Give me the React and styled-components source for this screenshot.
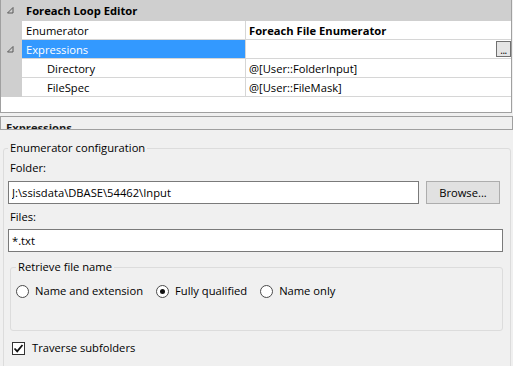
import React from 'react';
import styled, { createGlobalStyle } from 'styled-components';

const GlobalStyle = createGlobalStyle`
  html, body {
    margin: 0;
    padding: 0;
    background: #f0f0f0;
  }
  body {
    font-family: "Open Sans", "Liberation Sans", sans-serif;
    font-size: 11.2px;
    color: #000;
  }
`;

const Window = styled.div`
  width: 513px;
  height: 366px;
  overflow: hidden;
  background: #f0f0f0;
  display: flex;
  flex-direction: column;

  & > * {
    flex-shrink: 0;
  }
`;

const Grid = styled.div`
  width: 512px;
  height: 113px;
  box-sizing: border-box;
  border: 1px solid #a0a0a0;
  border-top: none;
  background: #fff;
  display: grid;
  grid-template-columns: 21px 224px 1fr;
  grid-template-rows: 21px repeat(4, 19px);
  align-content: start;
`;

const Gutter = styled.div`
  background: #cfcfcf;
  display: flex;
  align-items: center;
  justify-content: center;
  padding-right: 3px;
`;

const CategoryHeader = styled.div`
  grid-column: 2 / 4;
  background: #cfcfcf;
  font-weight: 700;
  display: flex;
  align-items: center;
  padding-left: 4px;
`;

const Cell = styled.div`
  display: flex;
  align-items: center;
  box-sizing: border-box;
  border-bottom: 1px solid #d6d6d6;
  border-right: ${p => (p.$name ? '1px solid #d6d6d6' : 'none')};
  padding-left: ${p => p.$indent || 4}px;
  background: ${p => (p.$selected ? '#3399ff' : '#fff')};
  color: ${p => (p.$selected ? '#fff' : '#000')};
  font-weight: ${p => (p.$bold ? 700 : 400)};
  white-space: nowrap;
  overflow: hidden;
`;

const EllipsisButton = styled.div`
  margin-left: auto;
  width: 15px;
  height: 16px;
  box-sizing: border-box;
  border: 1px solid #707070;
  background: #e5e5e5;
  font-size: 10px;
  line-height: 16px;
  text-align: center;
  letter-spacing: -0.5px;
`;

const Splitter = styled.div`
  height: 3px;
`;

const DescBar = styled.div`
  width: 513px;
  height: 14px;
  box-sizing: border-box;
  border: 1px solid #a0a0a0;
  overflow: hidden;
  padding: 3px 0 0 5px;
  font-weight: 700;
  line-height: 16px;
  color: #1e1e1e;
`;

const GroupBox = styled.fieldset`
  min-width: 0;
  border: 1px solid #dcdcdc;
  border-radius: 3px;
  margin: ${p => p.$margin};
  padding: ${p => p.$padding};
  line-height: 16px;
`;

const Legend = styled.legend`
  padding: 0 2px;
  line-height: 16px;
`;

const FieldLabel = styled.div`
  padding-left: 2px;
  line-height: 16px;
  margin-top: ${p => p.$top}px;
`;

const Row = styled.div`
  display: flex;
  align-items: center;
  gap: ${p => p.$gap || 0}px;
  margin-top: ${p => p.$top || 0}px;
`;

const TextBox = styled.input`
  flex: 1;
  min-width: 0;
  height: 23px;
  box-sizing: border-box;
  border: 1px solid #7a7a7a;
  background: #fff;
  padding: 0 3px;
  font: inherit;
  color: #000;
  outline: none;
  margin: 0;
`;

const Button = styled.div`
  width: 74px;
  height: 23px;
  box-sizing: border-box;
  border: 1px solid #adadad;
  background: #e1e1e1;
  display: flex;
  align-items: center;
  justify-content: center;
  margin-right: 3px;
`;

const Options = styled.div`
  display: flex;
  align-items: center;
  gap: 13px;
`;

const Option = styled.div`
  display: flex;
  align-items: center;
  gap: 6px;
  line-height: 16px;
`;

const Radio = styled.span`
  width: 13px;
  height: 13px;
  box-sizing: border-box;
  border-radius: 50%;
  border: 1px solid #4a4a4a;
  background: #fff;
  display: flex;
  align-items: center;
  justify-content: center;

  &::after {
    content: '';
    width: 5px;
    height: 5px;
    border-radius: 50%;
    background: #111;
    display: ${p => (p.$checked ? 'block' : 'none')};
  }
`;

const CheckRow = styled.div`
  display: flex;
  align-items: center;
  gap: 7px;
  padding-left: 4px;
  margin-top: 9px;
  line-height: 16px;
`;

const CheckBox = styled.span`
  width: 13px;
  height: 13px;
  box-sizing: border-box;
  border: 1px solid #333;
  background: #fff;
  display: flex;
  align-items: center;
  justify-content: center;
`;

const Expander = () => (
  <svg width="7" height="7" viewBox="0 0 7 7">
    <path d="M6 0.5 L6 6 L0.5 6 Z" fill="none" stroke="#595959" strokeWidth="1" />
  </svg>
);

const CheckMark = () => (
  <svg width="11" height="11" viewBox="0 0 11 11">
    <path d="M1.5 5.5 L4.2 8.3 L9.5 2" fill="none" stroke="#111" strokeWidth="1.8" />
  </svg>
);

const rows = [
  { name: 'Enumerator', value: 'Foreach File Enumerator', bold: true },
  { name: 'Expressions', selected: true, expander: true, button: true },
  { name: 'Directory', value: '@[User::FolderInput]', indent: 25 },
  { name: 'FileSpec', value: '@[User::FileMask]', indent: 25 },
];

const App = () => (
  <Window>
    <GlobalStyle />
    <Grid>
      <Gutter><Expander /></Gutter>
      <CategoryHeader>Foreach Loop Editor</CategoryHeader>
      {rows.map(r => (
        <React.Fragment key={r.name}>
          <Gutter>{r.expander && <Expander />}</Gutter>
          <Cell $name $indent={r.indent} $selected={r.selected}>{r.name}</Cell>
          <Cell $bold={r.bold} $indent={3}>
            {r.value}
            {r.button && <EllipsisButton>...</EllipsisButton>}
          </Cell>
        </React.Fragment>
      ))}
    </Grid>
    <Splitter />
    <DescBar>Expressions</DescBar>
    <GroupBox $margin="10px 2px 0 3px" $padding="0 7px 20px 4px">
      <Legend>Enumerator configuration</Legend>
      <FieldLabel $top={4}>Folder:</FieldLabel>
      <Row $gap={7} $top={5}>
        <TextBox readOnly value="J:\ssisdata\DBASE\54462\Input" />
        <Button>Browse...</Button>
      </Row>
      <FieldLabel $top={5}>Files:</FieldLabel>
      <Row $top={4}>
        <TextBox readOnly value="*.txt" />
      </Row>
      <GroupBox $margin="7px 0 0 2px" $padding="8px 6px 31px 5px">
        <Legend>Retrieve file name</Legend>
        <Options>
          <Option><Radio />Name and extension</Option>
          <Option><Radio $checked />Fully qualified</Option>
          <Option><Radio />Name only</Option>
        </Options>
      </GroupBox>
      <CheckRow>
        <CheckBox><CheckMark /></CheckBox>
        Traverse subfolders
      </CheckRow>
    </GroupBox>
  </Window>
);

export default App;
